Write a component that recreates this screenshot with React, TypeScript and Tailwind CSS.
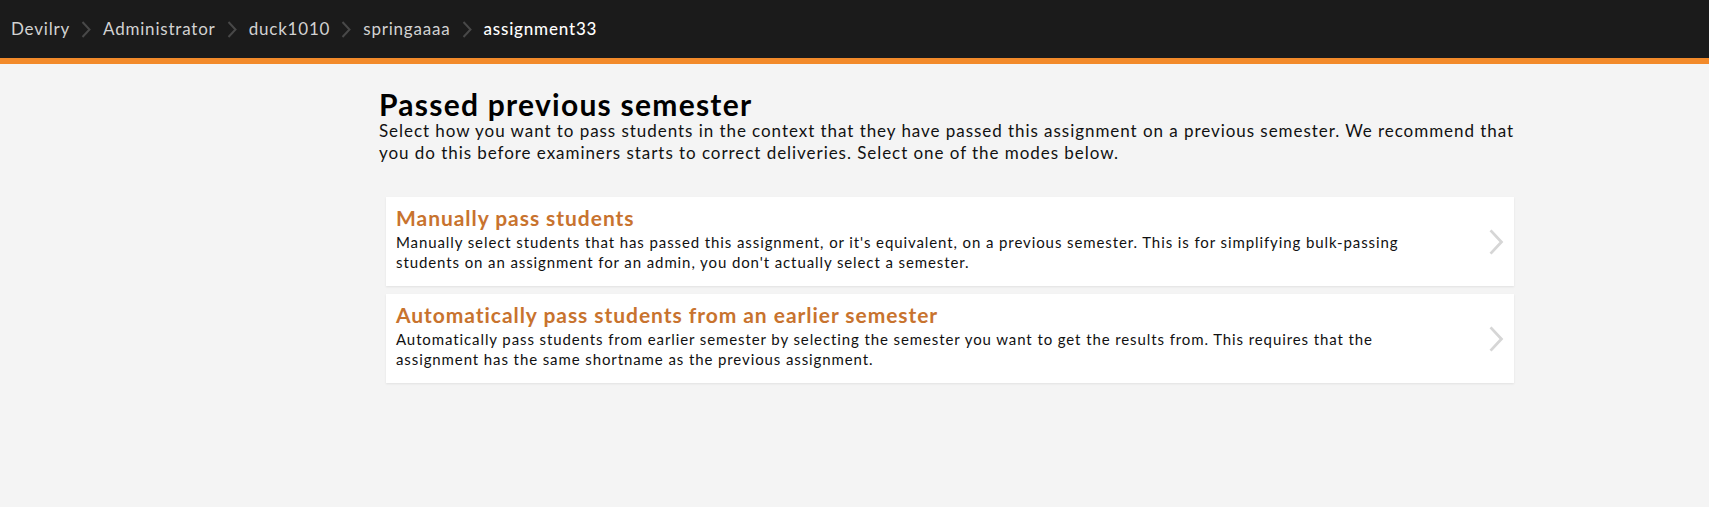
import React from "react"

const crumbs = ["Devilry", "Administrator", "duck1010", "springaaaa", "assignment33"]

const modes = [
  {
    title: "Manually pass students",
    text: "Manually select students that has passed this assignment, or it's equivalent, on a previous semester. This is for simplifying bulk-passing students on an assignment for an admin, you don't actually select a semester.",
  },
  {
    title: "Automatically pass students from an earlier semester",
    text: "Automatically pass students from earlier semester by selecting the semester you want to get the results from. This requires that the assignment has the same shortname as the previous assignment.",
  },
]

function Chevron({ className, width = 2 }: { className: string; width?: number }) {
  return (
    <svg viewBox="0 0 10 18" className={className} fill="none" stroke="currentColor" strokeWidth={width}>
      <path d="M1.5 1.5 L8.5 9 L1.5 16.5" />
    </svg>
  )
}

export default function App() {
  return (
    <div className="min-h-[507px] bg-[#f4f4f4] font-['Lato',sans-serif]">
      <nav className="h-[64px] bg-[#1b1b1b] border-b-[6px] border-[#f28a2a] flex items-center pl-[11px]">
        {crumbs.map((c, i) => (
          <div key={c} className="flex items-center">
            <span
              className={
                i === crumbs.length - 1
                  ? "text-[17px] tracking-[0.8px] text-white font-medium"
                  : "text-[17px] tracking-[0.8px] text-[#d2d2d2]"
              }
            >
              {c}
            </span>
            {i < crumbs.length - 1 && (
              <Chevron className="w-[10px] h-[19px] ml-[11px] mr-[12px] text-[#484848]" />
            )}
          </div>
        ))}
      </nav>

      <main className="ml-[379px] w-[1135px] pt-[25px]">
        <h1 className="text-[30px] leading-[31px] font-bold tracking-[1.25px] text-black">
          Passed previous semester
        </h1>
        <p className="w-[1145px] text-[17px] leading-[22px] tracking-[0.95px] text-[#111]">
          Select how you want to pass students in the context that they have passed this assignment on a previous
          semester. We recommend that you do this before examiners starts to correct deliveries. Select one of the
          modes below.
        </p>

        <div className="mt-[33px] ml-[7px] flex flex-col gap-[8px]">
          {modes.map((m) => (
            <div
              key={m.title}
              className="h-[89px] bg-white shadow-[0_1px_2px_rgba(0,0,0,0.08)] flex items-center pl-[10px] pr-[9px]"
            >
              <div className="flex-1 min-w-0 pr-[58px] self-start pt-[9px]">
                <div className="text-[21px] leading-[24px] font-bold tracking-[0.95px] text-[#c8732e]">{m.title}</div>
                <div className="mt-[2px] text-[15px] leading-[20px] tracking-[0.9px] text-[#111]">{m.text}</div>
              </div>
              <Chevron className="w-[18px] h-[28px] text-[#d6d6d6]" width={1.8} />
            </div>
          ))}
        </div>
      </main>
    </div>
  )
}
